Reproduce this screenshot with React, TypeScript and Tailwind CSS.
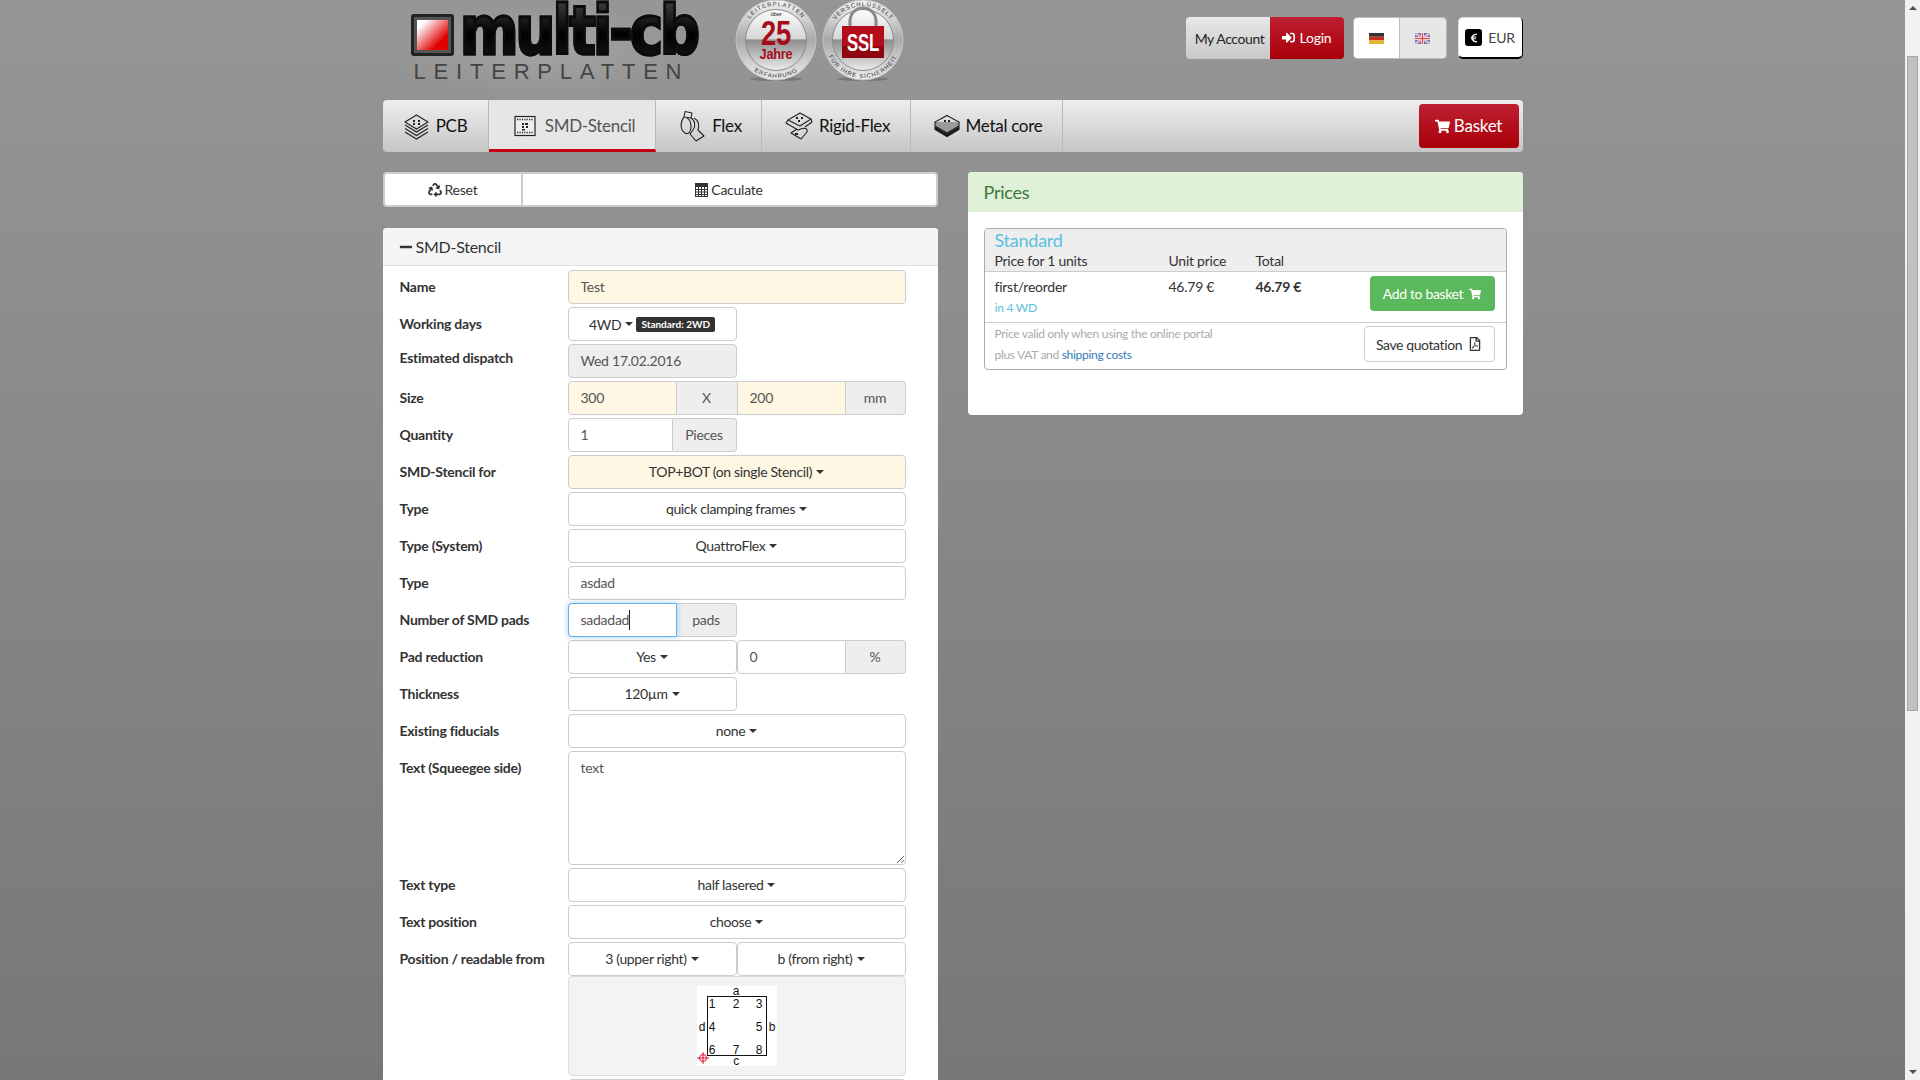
import React from 'react';
import { FaRecycle, FaMinus, FaShoppingCart, FaSignInAlt, FaEuroSign, FaRegFilePdf } from 'react-icons/fa';

const fieldBase = 'h-[34px] border border-[#ccc] px-[12px] pb-[2px] text-[14px] text-[#555] outline-none min-w-0';

function Caret() {
  return <span className="inline-block w-0 h-0 ml-[4px] align-middle border-x-[4px] border-t-[4px] border-x-transparent border-t-[#333]" />;
}

function Row({ label, children, labelClass = '' }: { label?: string; children: React.ReactNode; labelClass?: string }) {
  return (
    <div className="flex mb-[3px]">
      <div className={`w-[168px] h-[34px] shrink-0 font-bold text-[14px] text-[#333] leading-[34px] ${labelClass}`}>{label}</div>
      {children}
    </div>
  );
}

function Select({ text, className = 'w-[338px]', yellow }: { text: string; className?: string; yellow?: boolean }) {
  return (
    <div className={`h-[34px] border border-[#ccc] rounded-[4px] flex items-center justify-center pb-[1px] text-[14px] tracking-[-0.35px] text-[#333] ${yellow ? 'bg-[#fdf7e3]' : 'bg-white'} ${className}`}>
      {text}
      <Caret />
    </div>
  );
}

function Addon({ text, className }: { text: string; className: string }) {
  return <div className={`h-[34px] bg-[#eee] border border-[#ccc] flex items-center justify-center pb-[1px] text-[14px] text-[#555] ${className}`}>{text}</div>;
}

function BoardIcon({ layers = 3 }: { layers?: number }) {
  return (
    <svg width="27" height="27" viewBox="0 0 27 27" fill="none" stroke="#222" strokeWidth="1.1">
      <path d="M13.5 2 L25 9 L13.5 16 L2 9 Z" fill="#ddd" />
      <path d="M10 7h2v2h-2zM15 7h2v2h-2zM10 10h2v2h-2zM15 10h2v2h-2z" fill="#222" stroke="none" />
      {Array.from({ length: layers }).map((_, i) => (
        <path key={i} d={`M2 ${12 + i * 3.5} L13.5 ${19 + i * 3.5} L25 ${12 + i * 3.5}`} />
      ))}
    </svg>
  );
}

function StencilIcon() {
  return (
    <svg width="22" height="22" viewBox="0 0 22 22" fill="none">
      <rect x="1" y="1.5" width="20" height="19" fill="#eee" stroke="#222" strokeWidth="1.2" />
      <path d="M3 4.5H19M3 17.5H19" stroke="#222" strokeWidth="1.4" strokeDasharray="1.2 1.2" />
      <path d="M8 8h2v2H8zM11 8h3v2h-3zM8 11h2v2H8zM12 11h2v2h-2zM8 14h3v1.4H8z" fill="#222" />
    </svg>
  );
}

function FlexIcon() {
  return (
    <svg width="26" height="32" viewBox="0 0 26 32" fill="none" stroke="#222" strokeWidth="1.1" strokeLinejoin="round">
      <path d="M5 1.5 L12 3 L11 8 L4 7 Z" />
      <path d="M4 7 C0 12 0 20 5 23 C8 25 11 22 11 17 C11 12 9 9 7 8" />
      <path d="M11 8 C15 10 16 16 13 20 L10 24 L16 31 L24 26 L18 20 C20 15 18 10 14 8" />
    </svg>
  );
}

function RigidFlexIcon() {
  return (
    <svg width="28" height="28" viewBox="0 0 28 28" fill="none" stroke="#222" strokeWidth="1.1" strokeLinejoin="round">
      <path d="M15 1 L26 7 L15 14 L3 8 Z" fill="#ddd" />
      <path d="M11 5h2v2h-2zM16 5h2v2h-2zM13 8h2v2h-2z" fill="#222" stroke="none" />
      <path d="M3 8 L1 11 L13 18 C19 15 23 16 22 20 L16 27 L6 21 L12 17" />
      <path d="M26 7 L27 10 L20 15" />
      <path d="M10 21h3v2h-3z" fill="#222" stroke="none" />
    </svg>
  );
}

function MetalIcon() {
  return (
    <svg width="26" height="24" viewBox="0 0 26 24" fill="none" stroke="#222" strokeWidth="1.1">
      <path d="M13 1.5 L25 8 L13 15 L1 8 Z" fill="#ddd" />
      <path d="M10 6h2v2h-2zM14 6h2v2h-2zM10 9h2v2h-2zM14 9h2v2h-2z" fill="#222" stroke="none" />
      <path d="M1 8 V12 L13 19 L25 12 V8" fill="#999" />
      <path d="M1 13 V15.5 L13 22.5 L25 15.5 V13 L13 20 Z" fill="#111" />
    </svg>
  );
}

function CalcIcon() {
  return (
    <svg width="13" height="14" viewBox="0 0 13 14" className="inline-block mr-[2px]">
      <rect x="0.5" y="0.5" width="12" height="13" fill="#fff" stroke="#333" />
      <rect x="1" y="1" width="11" height="3" fill="#333" />
      <path d="M0 6.5H13M0 9H13M0 11.5H13M3.5 4V14M6.5 4V14M9.5 4V14" stroke="#333" strokeWidth="1" />
    </svg>
  );
}

function Seal({ top, bottom, children }: { top: string; bottom: string; children: React.ReactNode }) {
  const id = top.slice(0, 3);
  return (
    <svg width="84" height="84" viewBox="0 0 84 84" className="shrink-0">
      <defs>
        <linearGradient id={`${id}-ring`} x1="0" y1="0" x2="0" y2="1">
          <stop offset="0" stopColor="#f4f4f4" />
          <stop offset="0.5" stopColor="#a9a9a9" />
          <stop offset="1" stopColor="#ededed" />
        </linearGradient>
        <linearGradient id={`${id}-in`} x1="0" y1="0" x2="0" y2="1">
          <stop offset="0" stopColor="#fcfcfc" />
          <stop offset="0.48" stopColor="#d6d6d6" />
          <stop offset="0.5" stopColor="#8e8e8e" />
          <stop offset="1" stopColor="#ececec" />
        </linearGradient>
        <path id={`${id}-t`} d="M7 41 A34 34 0 0 1 75 41" />
        <path id={`${id}-b`} d="M3 41 A38 38 0 0 0 79 41" />
      </defs>
      <ellipse cx="41" cy="80" rx="26" ry="2" fill="#666" opacity="0.6" />
      <circle cx="41" cy="41" r="40" fill={`url(#${id}-ring)`} stroke="#c4c4c4" />
      <circle cx="41" cy="41" r="30.5" fill={`url(#${id}-in)`} stroke="#8a8a8a" />
      <text fontSize="6" fill="#333" fontFamily="Liberation Sans, sans-serif" letterSpacing="1">
        <textPath href={`#${id}-t`} startOffset="50%" textAnchor="middle">{top}</textPath>
      </text>
      <text fontSize="6" fill="#333" fontFamily="Liberation Sans, sans-serif" letterSpacing="1">
        <textPath href={`#${id}-b`} startOffset="50%" textAnchor="middle">{bottom}</textPath>
      </text>
      {children}
    </svg>
  );
}

function Logo() {
  return (
    <div className="w-[319px] shrink-0 pl-[28px] bg-[radial-gradient(ellipse_at_center,rgba(255,255,255,0.14),transparent_68%)]">
      <div className="flex items-center h-[62px] pt-[8px]">
        <div className="w-[43px] h-[42px] shrink-0 border-[3px] border-[#222] bg-[#555] rounded-[3px] p-[3px]">
          <div className="w-full h-full bg-[linear-gradient(135deg,#ffffff_15%,#f08080_45%,#e00000_75%)]" />
        </div>
        <span className="ml-[6px] mb-[9px] origin-left scale-x-[0.825] font-['DejaVu_Sans',sans-serif] font-bold text-[68px] leading-none tracking-[-3.5px] whitespace-nowrap bg-[linear-gradient(#444,#000_55%,#1c1c1c)] bg-clip-text text-transparent [-webkit-text-stroke:3px_#0c0c0c]">
          multi-cb
        </span>
      </div>
      <div className="mt-[-1px] pl-[3px] text-[22px] leading-[22px] tracking-[7.8px] text-[#444] font-['Liberation_Sans',sans-serif]">
        LEITERPLATTEN
      </div>
    </div>
  );
}

function Header() {
  return (
    <header className="h-[100px] flex">
      <Logo />
      <div className="flex gap-[3px] ml-[33px] mt-[-1px]">
        <Seal top="LEITERPLATTEN" bottom="ERFAHRUNG">
          <text x="41" y="17" fontSize="6" textAnchor="middle" fontFamily="Liberation Sans, sans-serif" fill="#222">über</text>
          <text x="41" y="46" fontSize="35" fontWeight="bold" textAnchor="middle" fontFamily="Liberation Sans, sans-serif" fill="#a50d1c" textLength="30" lengthAdjust="spacingAndGlyphs">25</text>
          <text x="41" y="60" fontSize="15" fontWeight="bold" textAnchor="middle" fontFamily="Liberation Sans, sans-serif" fill="#a50d1c" textLength="33" lengthAdjust="spacingAndGlyphs">Jahre</text>
        </Seal>
        <Seal top="VERSCHLÜSSELT" bottom="FÜR IHRE SICHERHEIT">
          <path d="M28 30 V22 A13 13 0 0 1 54 22 V30" fill="none" stroke="#888" strokeWidth="3" />
          <rect x="20" y="27" width="42" height="32" fill="#b30d1b" />
          <rect x="20" y="47" width="42" height="12" fill="#8e0710" />
          <text x="41" y="52" fontSize="24" fontWeight="bold" textAnchor="middle" fontFamily="Liberation Sans, sans-serif" fill="#fff" textLength="32" lengthAdjust="spacingAndGlyphs">SSL</text>
        </Seal>
      </div>
      <div className="ml-auto mt-[17px] flex items-start text-[14px]">
        <div className="flex h-[42px] rounded-[4px] overflow-hidden">
          <div className="w-[84px] bg-[linear-gradient(#e8e8e8,#c8c8c8)] text-[#222] flex items-center justify-center pt-[1px] pl-[4px] tracking-[-0.4px]">My Account</div>
          <div className="w-[74px] bg-[linear-gradient(#bd1f31,#a80008)] text-white flex items-center justify-center gap-[5px] pb-[1px]">
            <FaSignInAlt size={13} />
            Login
          </div>
        </div>
        <div className="flex h-[42px] ml-[9px] rounded-[4px] overflow-hidden border border-[#bbb]">
          <div className="w-[46px] bg-white flex items-center justify-center border-r border-[#bbb]">
            <svg width="15" height="11" viewBox="0 0 15 11">
              <rect width="15" height="3.7" fill="#333" />
              <rect y="3.7" width="15" height="3.7" fill="#c8301e" />
              <rect y="7.4" width="15" height="3.6" fill="#e6b532" />
            </svg>
          </div>
          <div className="w-[46px] bg-[#e6e6e6] flex items-center justify-center">
            <svg width="15" height="11" viewBox="0 0 15 11" opacity="0.75">
              <rect width="15" height="11" fill="#3f4fb0" />
              <path d="M0 0L15 11M15 0L0 11" stroke="#fff" strokeWidth="2" />
              <path d="M0 0L15 11M15 0L0 11" stroke="#d33" strokeWidth="0.8" />
              <path d="M7.5 0V11M0 5.5H15" stroke="#fff" strokeWidth="3" />
              <path d="M7.5 0V11M0 5.5H15" stroke="#d22" strokeWidth="1.5" />
            </svg>
          </div>
        </div>
        <div className="ml-[11px] w-[65px] h-[42px] bg-white rounded-[5px] border border-[#ddd] border-b-2 border-r border-b-black border-r-black flex items-center justify-center gap-[6px] text-[#444]">
          <span className="w-[17px] h-[17px] rounded-[3px] bg-black text-white flex items-center justify-center">
            <FaEuroSign size={10} />
          </span>
          EUR
        </div>
      </div>
    </header>
  );
}

function Tab({ icon, text, width, active, className = '' }: { icon: React.ReactNode; text: string; width: string; active?: boolean; className?: string }) {
  return (
    <div className={`${width} h-full flex items-center justify-center gap-[6px] text-[17px] tracking-[-0.3px] border-r border-[#b9b9b9] ${className} ${active ? 'bg-[#e6e6e6] text-[#555] border-b-[3px] border-b-[#c40012] pt-[3px] gap-[9px]' : 'text-[#111]'}`}>
      {icon}
      {text}
    </div>
  );
}

function Nav() {
  return (
    <nav className="h-[52px] rounded-[4px] bg-[linear-gradient(#eeeeee,#c6c6c6)] flex items-center overflow-hidden">
      <Tab width="w-[106px]" icon={<BoardIcon />} text="PCB" />
      <Tab width="w-[167px]" icon={<StencilIcon />} text="SMD-Stencil" active className="pl-[6px]" />
      <Tab width="w-[106px]" icon={<FlexIcon />} text="Flex" className="pl-[6px]" />
      <Tab width="w-[149px]" icon={<RigidFlexIcon />} text="Rigid-Flex" className="pl-[4px]" />
      <Tab width="w-[152px]" icon={<MetalIcon />} text="Metal core" className="pl-[4px]" />
      <div className="ml-auto mr-[4px] w-[100px] h-[44px] rounded-[4px] bg-[linear-gradient(#bd1f31,#a80008)] text-white text-[17px] flex items-center justify-center gap-[4px]">
        <FaShoppingCart size={15} />
        Basket
      </div>
    </nav>
  );
}

function FormPanel() {
  return (
    <div className="mt-[21px] bg-white rounded-t-[4px]">
      <div className="h-[38px] bg-[#f5f5f5] border-b border-[#ddd] rounded-t-[4px] pl-[16px] flex items-center text-[16px] text-[#333]">
        <FaMinus size={14} className="mr-[3px]" />
        SMD-Stencil
      </div>
      <div className="pl-[17px] pt-[4px]">
        <Row label="Name">
          <input readOnly value="Test" className={`${fieldBase} w-[338px] rounded-[4px] bg-[#fdf7e3]`} />
        </Row>
        <Row label="Working days">
          <div className="w-[169px] h-[34px] border border-[#ccc] rounded-[4px] bg-white flex items-center justify-center text-[14px] text-[#333]">
            4WD
            <Caret />
            <span className="ml-[3px] h-[15px] px-[5px] rounded-[2px] bg-[#333] text-white text-[10px] font-bold leading-[15px] tracking-normal">Standard: 2WD</span>
          </div>
        </Row>
        <Row label="Estimated dispatch" labelClass="mt-[-3px]">
          <input readOnly value="Wed 17.02.2016" className={`${fieldBase} w-[169px] rounded-[4px] bg-[#eee]`} />
        </Row>
        <Row label="Size">
          <div className="flex w-[338px]">
            <input readOnly value="300" className={`${fieldBase} w-[109px] rounded-l-[4px] bg-[#fdf7e3]`} />
            <Addon text="X" className="w-[60px] border-x-0" />
            <input readOnly value="200" className={`${fieldBase} w-[109px] bg-[#fdf7e3]`} />
            <Addon text="mm" className="w-[60px] border-l-0 rounded-r-[4px]" />
          </div>
        </Row>
        <Row label="Quantity">
          <div className="flex w-[169px]">
            <input readOnly value="1" className={`${fieldBase} w-[105px] rounded-l-[4px] bg-white`} />
            <Addon text="Pieces" className="w-[64px] border-l-0 rounded-r-[4px]" />
          </div>
        </Row>
        <Row label="SMD-Stencil for"><Select text="TOP+BOT (on single Stencil)" yellow /></Row>
        <Row label="Type"><Select text="quick clamping frames" /></Row>
        <Row label="Type (System)"><Select text="QuattroFlex" /></Row>
        <Row label="Type">
          <input readOnly value="asdad" className={`${fieldBase} w-[338px] rounded-[4px] bg-white`} />
        </Row>
        <Row label="Number of SMD pads">
          <div className="flex w-[169px]">
            <div className="w-[109px] h-[34px] border border-[#66afe9] rounded-l-[4px] px-[12px] pb-[1px] flex items-center text-[14px] text-[#555] shadow-[0_0_6px_rgba(102,175,233,0.6)] z-10 bg-white">
              sadadad
              <span className="w-px h-[20px] bg-[#222]" />
            </div>
            <Addon text="pads" className="w-[60px] border-l-0 rounded-r-[4px]" />
          </div>
        </Row>
        <Row label="Pad reduction">
          <div className="flex w-[338px]">
            <Select text="Yes" className="w-[169px]" />
            <input readOnly value="0" className={`${fieldBase} w-[109px] rounded-l-[4px] bg-white`} />
            <Addon text="%" className="w-[60px] border-l-0 rounded-r-[4px]" />
          </div>
        </Row>
        <Row label="Thickness"><Select text="120µm" className="w-[169px]" /></Row>
        <Row label="Existing fiducials"><Select text="none" /></Row>
        <Row label="Text (Squeegee side)">
          <textarea readOnly value="text" className="w-[338px] h-[114px] border border-[#ccc] rounded-[4px] px-[12px] pt-[5px] text-[14px] text-[#555] outline-none resize-y block" />
        </Row>
        <Row label="Text type"><Select text="half lasered" /></Row>
        <Row label="Text position"><Select text="choose" /></Row>
        <div className="flex">
          <div className="w-[168px] shrink-0 font-bold text-[14px] text-[#333] leading-[34px]">Position / readable from</div>
          <div className="flex w-[338px]">
            <Select text="3 (upper right)" className="w-[169px]" />
            <Select text="b (from right)" className="w-[169px]" />
          </div>
        </div>
        <Row>
          <div className="w-[338px] h-[100px] bg-[#f3f3f3] border border-[#ddd] rounded-[4px] flex items-center justify-center">
            <svg width="80" height="80" viewBox="0 0 80 80" fontFamily="Liberation Sans, sans-serif" fontSize="12" fill="#111" textAnchor="middle">
              <rect width="80" height="80" fill="#fff" />
              <rect x="10.5" y="10.5" width="59" height="59" fill="none" stroke="#111" />
              <text x="39" y="8.5">a</text>
              <text x="15" y="22">1</text><text x="39" y="22">2</text><text x="62" y="22">3</text>
              <text x="5" y="45">d</text><text x="15" y="45">4</text><text x="62" y="45">5</text><text x="75" y="45">b</text>
              <text x="15" y="68">6</text><text x="39" y="68">7</text><text x="62" y="68">8</text>
              <text x="39" y="78.5">c</text>
              <circle cx="6" cy="72" r="3.5" fill="none" stroke="#e01030" />
              <path d="M0 72H12M6 66V78" stroke="#e01030" />
            </svg>
          </div>
        </Row>
        <div className="w-[338px] h-[34px] ml-[168px] border border-[#ccc] rounded-[4px]" />
      </div>
    </div>
  );
}

function Prices() {
  return (
    <div className="h-[243px] bg-white rounded-[4px] overflow-hidden">
      <div className="h-[40px] bg-[#dff0d8] pl-[16px] flex items-center text-[18px] text-[#3c763d]">Prices</div>
      <div className="mx-[16px] mt-[16px] border border-[#aaa] rounded-[4px] overflow-hidden text-[14px] text-[#333]">
        <div className="h-[43px] bg-[#eee] border-b border-[#ccc] pl-[10px]">
          <div className="text-[18px] leading-[22px] text-[#5bc0de]">Standard</div>
          <div className="flex leading-[20px]">
            <span className="w-[174px]">Price for 1 units</span>
            <span className="w-[87px]">Unit price</span>
            <span>Total</span>
          </div>
        </div>
        <div className="h-[51px] border-b border-[#ccc] pl-[10px] flex">
          <div className="w-[174px] pt-[5px]">
            <div className="leading-[20px]">first/reorder</div>
            <div className="text-[12px] leading-[20px] text-[#5bc0de] mt-[1px]">in 4 WD</div>
          </div>
          <div className="w-[87px] pt-[5px] leading-[20px]">46.79 €</div>
          <div className="pt-[5px] leading-[20px] font-bold">46.79 €</div>
          <div className="ml-auto mr-[11px] mt-[4px] w-[125px] h-[35px] rounded-[4px] bg-[#5cb85c] text-white flex items-center justify-center gap-[6px] tracking-[-0.35px]">
            Add to basket
            <FaShoppingCart size={12} />
          </div>
        </div>
        <div className="h-[46px] pl-[10px] flex">
          <div className="text-[12px] leading-[21px] text-[#aaa] tracking-[-0.3px]">
            <div>Price valid only when using the online portal</div>
            <div>plus VAT and <span className="text-[#337ab7]">shipping costs</span></div>
          </div>
          <div className="ml-auto mr-[11px] mt-[3px] w-[131px] h-[36px] rounded-[4px] border border-[#ccc] flex items-center justify-center gap-[6px] tracking-[-0.4px]">
            Save quotation
            <FaRegFilePdf size={14} />
          </div>
        </div>
      </div>
    </div>
  );
}

function Scrollbar() {
  return (
    <aside className="w-[15px] shrink-0 h-full bg-[#f1f1f1] flex flex-col items-center">
      <span className="mt-[6px] w-0 h-0 border-x-[4px] border-b-[4px] border-x-transparent border-b-[#505050]" />
      <div className="mt-[46px] w-[11px] h-[655px] bg-[#c1c1c1] border border-[#a8a8a8]" />
      <span className="mt-auto mb-[6px] w-0 h-0 border-x-[4px] border-t-[4px] border-x-transparent border-t-[#505050]" />
    </aside>
  );
}

export default function App() {
  return (
    <div className="flex h-screen overflow-hidden font-['Lato',sans-serif] tracking-[-0.25px]">
      <main className="flex-1 h-full overflow-hidden bg-[linear-gradient(#969696,#777777)]">
        <div className="w-[1140px] mx-auto">
          <Header />
          <Nav />
          <div className="flex justify-between mt-[20px]">
            <div className="w-[555px]">
              <div className="h-[35px] flex border-2 border-[#ccc] rounded-[4px] bg-white text-[14px] text-[#333]">
                <div className="w-[138px] border-r-2 border-[#ccc] flex items-center justify-center gap-[3px]">
                  <FaRecycle size={14} />
                  Reset
                </div>
                <div className="flex-1 flex items-center justify-center gap-[1px]">
                  <CalcIcon />
                  Caculate
                </div>
              </div>
              <FormPanel />
            </div>
            <div className="w-[555px]">
              <Prices />
            </div>
          </div>
        </div>
      </main>
      <Scrollbar />
    </div>
  );
}
